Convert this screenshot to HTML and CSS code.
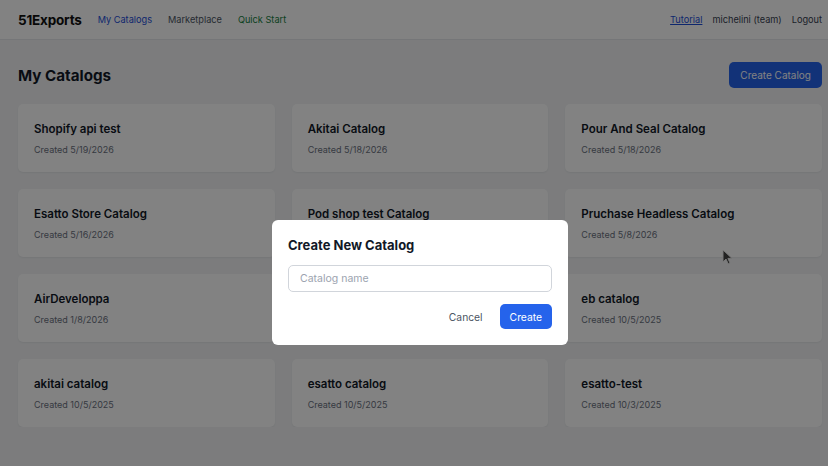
FILE: index.html
```html
<!DOCTYPE html>
<html lang="en">
<head>
  <meta charset="UTF-8" />
  <meta name="viewport" content="width=device-width, initial-scale=1.0"/>
  <title>My Catalogs - 51Exports</title>
  <link rel="stylesheet" href="styles.css">
</head>
<body>
  <header class="topbar">
    <div class="topbar-left">
      <span class="logo">51Exports</span>
      <a class="nav-link active" href="#">My Catalogs</a>
      <a class="nav-link" href="#">Marketplace</a>
      <a class="nav-link quick" href="#">Quick Start</a>
    </div>
    <div class="topbar-right">
      <a class="tutorial" href="#">Tutorial</a>
      <span class="user">michelini (team)</span>
      <a class="logout" href="#">Logout</a>
    </div>
  </header>

  <main class="page">
    <div class="page-head">
      <h1>My Catalogs</h1>
      <button class="btn-primary">Create Catalog</button>
    </div>

    <div class="catalog-grid">
      <div class="card"><h3>Shopify api test</h3><p>Created 5/19/2026</p></div>
      <div class="card"><h3>Akitai Catalog</h3><p>Created 5/18/2026</p></div>
      <div class="card"><h3>Pour And Seal Catalog</h3><p>Created 5/18/2026</p></div>
      <div class="card"><h3>Esatto Store Catalog</h3><p>Created 5/16/2026</p></div>
      <div class="card"><h3>Pod shop test Catalog</h3><p>Created 5/10/2026</p></div>
      <div class="card"><h3>Pruchase Headless Catalog</h3><p>Created 5/8/2026</p></div>
      <div class="card"><h3>AirDeveloppa</h3><p>Created 1/8/2026</p></div>
      <div class="card"><h3>test</h3><p>Created 12/1/2025</p></div>
      <div class="card"><h3>eb catalog</h3><p>Created 10/5/2025</p></div>
      <div class="card"><h3>akitai catalog</h3><p>Created 10/5/2025</p></div>
      <div class="card"><h3>esatto catalog</h3><p>Created 10/5/2025</p></div>
      <div class="card"><h3>esatto-test</h3><p>Created 10/3/2025</p></div>
    </div>
  </main>

  <div class="overlay">
    <div class="modal">
      <h2>Create New Catalog</h2>
      <input type="text" placeholder="Catalog name">
      <div class="modal-actions">
        <button class="btn-cancel">Cancel</button>
        <button class="btn-create">Create</button>
      </div>
    </div>
  </div>

  <svg class="cursor" width="11" height="16" viewBox="0 0 11 16">
    <path d="M1 1 L1 13 L4 10 L6.2 14.8 L8 14 L5.9 9.4 L10 9.4 Z" fill="#222" stroke="#777" stroke-width="1"/>
  </svg>
</body>
</html>
```

FILE: styles.css
```css
* { box-sizing: border-box; }

body {
  margin: 0;
  background: #f3f4f6;
  font-family: Inter, "Liberation Sans", sans-serif;
  color: #111827;
}

.topbar {
  height: 40px;
  background: #fff;
  border-bottom: 1px solid #e5e7eb;
  display: flex;
  align-items: center;
  justify-content: space-between;
  padding: 0 6px 0 18px;
}
.topbar-left, .topbar-right {
  display: flex;
  align-items: center;
}
.topbar-left { gap: 16px; }
.topbar-right { gap: 10px; }
.logo {
  font-weight: 700;
  font-size: 13.5px;
  letter-spacing: -0.2px;
  color: #111;
}
.nav-link, .tutorial, .user, .logout {
  font-size: 9.2px;
  text-decoration: none;
  color: #4b5563;
}
.nav-link.active { color: #1d4ed8; }
.nav-link.quick { color: #15803d; }
.tutorial {
  color: #1d4ed8;
  text-decoration: underline;
}
.user, .logout { color: #374151; }

.page { padding: 22px 6px 0 18px; }
.page-head {
  display: flex;
  align-items: center;
  justify-content: space-between;
  height: 26px;
}
.page-head h1 {
  margin: 0;
  font-size: 15.2px;
  font-weight: 700;
}
.btn-primary {
  height: 26px;
  padding: 0 11px;
  border: none;
  border-radius: 5px;
  background: #2563eb;
  color: #fff;
  font-family: inherit;
  font-size: 10px;
}

.catalog-grid {
  margin-top: 16px;
  display: grid;
  grid-template-columns: repeat(3, 1fr);
  gap: 17px;
}
.card {
  height: 68px;
  background: #fff;
  border-radius: 5px;
  padding: 18px 16px 0;
  box-shadow: 0 1px 2px rgba(0,0,0,0.06);
}
.card h3 {
  margin: 0;
  font-size: 11.5px;
  line-height: 15px;
  font-weight: 600;
}
.card p {
  margin: 7px 0 0;
  font-size: 9px;
  line-height: 12px;
  color: #6b7280;
}

.overlay {
  position: fixed;
  inset: 0;
  background: rgba(0,0,0,0.49);
  display: flex;
  justify-content: center;
  align-items: flex-start;
  padding: 220px 0 0 12px;
}
.modal {
  width: 296px;
  background: #fff;
  border-radius: 6px;
  padding: 16px;
}
.modal h2 {
  margin: 0;
  font-size: 13px;
  line-height: 18px;
  font-weight: 700;
}
.modal input {
  display: block;
  width: 100%;
  height: 27px;
  margin-top: 11px;
  padding: 0 11px;
  border: 1px solid #d1d5db;
  border-radius: 5px;
  font-family: inherit;
  font-size: 10.5px;
  outline: none;
}
.modal input::placeholder { color: #9ca3af; }
.modal-actions {
  margin-top: 12px;
  display: flex;
  justify-content: flex-end;
  gap: 5px;
}
.btn-cancel, .btn-create {
  height: 25px;
  border: none;
  border-radius: 5px;
  font-family: inherit;
  font-size: 10.3px;
}
.btn-cancel {
  background: none;
  color: #4b5563;
  padding: 0 12px;
}
.btn-create {
  background: #2563eb;
  color: #fff;
  padding: 0 10px;
}

.cursor {
  position: fixed;
  left: 722px;
  top: 249px;
}
```
